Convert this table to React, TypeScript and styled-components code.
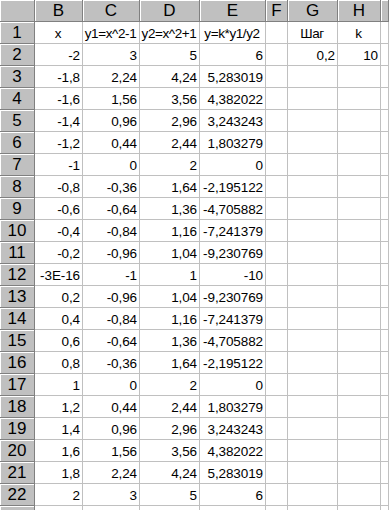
import { Fragment } from "react";
import styled, { createGlobalStyle } from "styled-components";

const GlobalStyle = createGlobalStyle`
  html, body {
    margin: 0;
    padding: 0;
    background: #ffffff;
  }
`;

const Sheet = styled.div`
  display: grid;
  grid-template-columns: 35px 48px 57px 60px 66px 22px 50px 43px 1fr;
  grid-auto-rows: 22px;
  width: 389px;
  height: 510px;
  overflow: hidden;
  font-family: "Liberation Sans", Arial, sans-serif;
  background: #ffffff;
`;

const Header = styled.div`
  box-sizing: border-box;
  background: #c0c0c0;
  border-right: 1px solid #808080;
  border-bottom: 1px solid #808080;
  box-shadow: inset 1px 1px 0 #ffffff;
  display: flex;
  align-items: center;
  justify-content: center;
  font-size: 17px;
  color: #000000;
  line-height: 1;
`;

const Corner = styled(Header)``;

const Cell = styled.div<{ $title?: boolean }>`
  box-sizing: border-box;
  border-right: 1px solid #c0c0c0;
  border-bottom: 1px solid #c0c0c0;
  display: flex;
  align-items: flex-end;
  justify-content: ${(p) => (p.$title ? "center" : "flex-end")};
  padding: 0 2px 3px 1px;
  font-size: 13.5px;
  letter-spacing: ${(p) => (p.$title ? "-0.4px" : "-0.1px")};
  line-height: 1;
  white-space: nowrap;
  color: #000000;
`;

const columns = ["B", "C", "D", "E", "F", "G", "H", ""];

const rows: string[][] = [
  ["x", "y1=x^2-1", "y2=x^2+1", "y=k*y1/y2", "", "Шаг", "k", ""],
  ["-2", "3", "5", "6", "", "0,2", "10", ""],
  ["-1,8", "2,24", "4,24", "5,283019"],
  ["-1,6", "1,56", "3,56", "4,382022"],
  ["-1,4", "0,96", "2,96", "3,243243"],
  ["-1,2", "0,44", "2,44", "1,803279"],
  ["-1", "0", "2", "0"],
  ["-0,8", "-0,36", "1,64", "-2,195122"],
  ["-0,6", "-0,64", "1,36", "-4,705882"],
  ["-0,4", "-0,84", "1,16", "-7,241379"],
  ["-0,2", "-0,96", "1,04", "-9,230769"],
  ["-3E-16", "-1", "1", "-10"],
  ["0,2", "-0,96", "1,04", "-9,230769"],
  ["0,4", "-0,84", "1,16", "-7,241379"],
  ["0,6", "-0,64", "1,36", "-4,705882"],
  ["0,8", "-0,36", "1,64", "-2,195122"],
  ["1", "0", "2", "0"],
  ["1,2", "0,44", "2,44", "1,803279"],
  ["1,4", "0,96", "2,96", "3,243243"],
  ["1,6", "1,56", "3,56", "4,382022"],
  ["1,8", "2,24", "4,24", "5,283019"],
  ["2", "3", "5", "6"],
];

export default function App() {
  return (
    <>
      <GlobalStyle />
      <Sheet>
        <Corner />
        {columns.map((c, i) => (
          <Header key={"h" + i}>{c}</Header>
        ))}
        {rows.map((row, r) => (
          <Fragment key={"row" + r}>
            <Header>{r + 1}</Header>
            {columns.map((_, c) => (
              <Cell key={c} $title={r === 0}>
                {row[c] ?? ""}
              </Cell>
            ))}
          </Fragment>
        ))}
        {/* partly visible row under row 22 */}
        <Header />
        {columns.map((_, c) => (
          <Cell key={"last" + c} />
        ))}
      </Sheet>
    </>
  );
}
